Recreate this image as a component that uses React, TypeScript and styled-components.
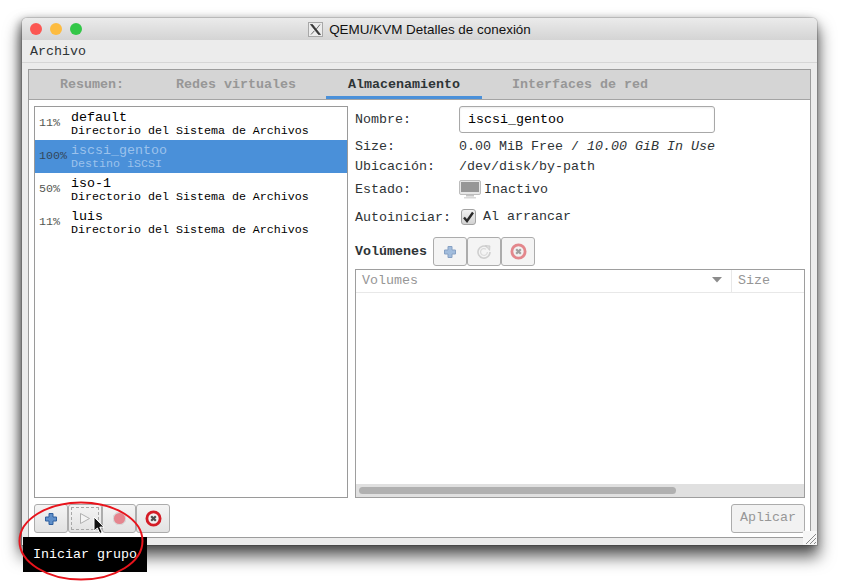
import React, { FC } from "react";
import styled, { createGlobalStyle } from "styled-components";

const GlobalStyle = createGlobalStyle`
  html, body {
    margin: 0;
    background: #ffffff;
    overflow: hidden;
  }
  * {
    box-sizing: border-box;
  }
`;

const Page = styled.div`
  position: relative;
  width: 844px;
  height: 586px;
  padding: 18px 0 0 22px;
  font-family: "Liberation Mono", monospace;
  font-size: 13.33px;
  color: #2e3436;
`;

const Window = styled.div`
  position: relative;
  width: 795px;
  height: 527px;
  display: flex;
  flex-direction: column;
  background: #ececec;
  border-radius: 5px 5px 0 0;
  box-shadow: 0 0 0 1px rgba(0, 0, 0, 0.12), 0 10px 16px 2px rgba(0, 0, 0, 0.62),
    -2px 2px 8px rgba(0, 0, 0, 0.35);
`;

const TitleBar = styled.div`
  position: relative;
  height: 22px;
  flex: none;
  display: flex;
  align-items: center;
  justify-content: center;
  gap: 6px;
  background: linear-gradient(#ebebeb, #d4d4d4);
  border-radius: 5px 5px 0 0;
`;

const Lights = styled.div`
  position: absolute;
  left: 8px;
  top: 5px;
  display: flex;
  gap: 8px;
`;

const Light = styled.span<{ $color: string }>`
  width: 12px;
  height: 12px;
  border-radius: 50%;
  background: ${(p) => p.$color};
`;

const Title = styled.span`
  font-family: "Liberation Sans", Arial, sans-serif;
  font-size: 13.45px;
  color: #111111;
`;

const MenuBar = styled.div`
  height: 23px;
  flex: none;
  padding: 4px 0 0 8px;
  line-height: 16px;
  border-bottom: 1px solid #d6d6d6;
`;

const Notebook = styled.div`
  margin: 6px 6px 7px;
  flex: 1;
  min-height: 0;
  display: flex;
  flex-direction: column;
  background: #ffffff;
  border: 1px solid #9c9c9c;
`;

const TabBar = styled.div`
  height: 30px;
  flex: none;
  display: flex;
  gap: 8px;
  padding-left: 9px;
  background: #d5d5d5;
  border-bottom: 1px solid #a4a4a4;
`;

const Tab = styled.div<{ $active?: boolean }>`
  padding: 7px 22px 0;
  height: 29px;
  font-weight: bold;
  line-height: 16px;
  color: ${(p) => (p.$active ? "#2e3436" : "#979797")};
  border-bottom: 3px solid ${(p) => (p.$active ? "#4a90d9" : "transparent")};
  margin-bottom: -1px;
`;

const Body = styled.div`
  flex: 1;
  min-height: 0;
  display: flex;
  flex-direction: column;
  padding: 6px 5px 4px;
`;

const Panes = styled.div`
  height: 392px;
  flex: none;
  display: flex;
  gap: 7px;
`;

const PoolList = styled.div`
  width: 314px;
  flex: none;
  border: 1px solid #9a9a9a;
  background: #ffffff;
`;

const PoolRow = styled.div<{ $selected?: boolean }>`
  height: 33px;
  display: flex;
  align-items: center;
  background: ${(p) => (p.$selected ? "#4a90d9" : "transparent")};
`;

const Percent = styled.span<{ $selected?: boolean }>`
  width: 36px;
  flex: none;
  padding: 0 0 2px 4px;
  font-size: 11.67px;
  color: ${(p) => (p.$selected ? "#33475c" : "#555753")};
`;

const PoolText = styled.div`
  display: flex;
  flex-direction: column;
  padding-top: 1px;
`;

const PoolName = styled.span<{ $selected?: boolean }>`
  line-height: 15px;
  color: ${(p) => (p.$selected ? "#9cc2ec" : "#000000")};
`;

const PoolKind = styled.span<{ $selected?: boolean }>`
  font-size: 11.67px;
  line-height: 13px;
  color: ${(p) => (p.$selected ? "#9cc2ec" : "#000000")};
`;

const Details = styled.div`
  flex: 1;
  min-width: 0;
  display: flex;
  flex-direction: column;
`;

const FormRow = styled.div<{ $height: number }>`
  height: ${(p) => p.$height}px;
  flex: none;
  display: flex;
  align-items: center;
`;

const Label = styled.span`
  width: 104px;
  flex: none;
`;

const NameEntry = styled.div`
  width: 256px;
  height: 27px;
  padding-left: 8px;
  line-height: 25px;
  color: #000000;
  background: #ffffff;
  border: 1px solid #a8a8a8;
  border-radius: 3px;
  box-shadow: inset 0 1px 2px rgba(0, 0, 0, 0.08);
`;

const Emphasis = styled.em`
  font-style: italic;
`;

const StateValue = styled.div`
  display: flex;
  align-items: center;
  gap: 3px;
`;

const AutoLabel = styled.span`
  margin-left: 7px;
  position: relative;
  top: -1px;
`;

const CheckBox = styled.span`
  width: 15px;
  height: 16px;
  margin-left: 2px;
  display: flex;
  align-items: center;
  justify-content: center;
  background: linear-gradient(#f2f2f2, #d2d2d2);
  border: 1px solid #a2a2a2;
  border-radius: 3px;
`;

const VolumesHeader = styled.div`
  display: flex;
  align-items: center;
  margin-top: 8px;
  height: 29px;
  flex: none;
`;

const VolumesTitle = styled.span`
  width: 78px;
  flex: none;
  font-weight: bold;
`;

const ToolGroup = styled.div`
  display: flex;
`;

const ToolButton = styled.div<{ $dim?: boolean }>`
  width: 34px;
  height: 29px;
  flex: none;
  display: flex;
  align-items: center;
  justify-content: center;
  background: ${(p) => (p.$dim ? "#f4f4f4" : "linear-gradient(#f4f4f4, #e2e2e2)")};
  border: 1px solid #acacac;
  border-radius: 3px;
`;

const FocusRing = styled.div`
  width: 28px;
  height: 23px;
  display: flex;
  align-items: center;
  justify-content: center;
  border: 1px dashed #a8a8a8;
`;

const VolumesTable = styled.div`
  margin-top: 3px;
  flex: 1;
  min-height: 0;
  display: flex;
  flex-direction: column;
  border: 1px solid #9e9e9e;
`;

const TableHead = styled.div`
  height: 23px;
  flex: none;
  display: flex;
  color: #969696;
  font-weight: normal;
  border-bottom: 1px solid #e8e8e8;
`;

const HeadCell = styled.div<{ $grow?: boolean }>`
  ${(p) => (p.$grow ? "flex: 1;" : "width: 72px;")}
  display: flex;
  align-items: center;
  justify-content: space-between;
  padding: 0 9px 2px 6px;
  border-right: ${(p) => (p.$grow ? "1px solid #e8e8e8" : "none")};
`;

const TableBody = styled.div`
  flex: 1;
`;

const ScrollTrack = styled.div`
  height: 13px;
  flex: none;
  padding: 3px 128px 3px 3px;
  background: #e0e0e0;
`;

const ScrollThumb = styled.div`
  height: 7px;
  border-radius: 4px;
  background: #b0b0b0;
`;

const ActionBar = styled.div`
  margin-top: 6px;
  display: flex;
  justify-content: space-between;
`;

const ApplyButton = styled.div`
  width: 74px;
  height: 29px;
  line-height: 26px;
  text-align: center;
  color: #979797;
  background: #f2f2f2;
  border: 1px solid #acacac;
  border-radius: 3px;
`;

const ResizeGrip = styled.svg`
  position: absolute;
  right: 0;
  bottom: 0;
`;

const Tooltip = styled.div`
  position: absolute;
  left: 23px;
  top: 537px;
  width: 124px;
  height: 35px;
  padding-left: 10px;
  line-height: 36px;
  color: #ffffff;
  background: #000000;
`;

const Annotation = styled.svg`
  position: absolute;
  left: 0;
  top: 480px;
`;

const Pointer = styled.svg`
  position: absolute;
  left: 92px;
  top: 516px;
`;

const XLogo: FC = () => (
  <svg width="15" height="15" viewBox="0 0 15 15">
    <rect x="0.5" y="0.5" width="14" height="14" fill="#ececec" stroke="#a8a8a8" />
    <path d="M2.5 2.5h2l8 10h-2zM12 2.5L8.4 7M6.4 8.8L3 12.5" fill="#333333" stroke="#333333" strokeWidth="0.7" />
  </svg>
);

const PlusIcon: FC<{ $faded?: boolean }> = ({ $faded }) => (
  <svg width="14" height="14" viewBox="0 0 14 14" opacity={$faded ? 0.55 : 1}>
    <path
      d="M5 1.5h4v3.5h3.5v4H9v3.5H5V9H1.5V5H5z"
      fill="#5f8fc9"
      stroke="#2f5f9e"
      strokeWidth="1"
      strokeLinejoin="round"
    />
  </svg>
);

const RefreshIcon: FC = () => (
  <svg width="16" height="16" viewBox="0 0 16 16" fill="none">
    <path d="M11.5 3.2A6 6 0 1 0 14 8" stroke="#cfcfcf" strokeWidth="1.6" />
    <path d="M10 5.2A3.4 3.4 0 1 0 11.4 8" stroke="#dadada" strokeWidth="1.2" />
    <path d="M9.5 1.5l4.5.4-.4 4.5z" fill="#dcdcdc" stroke="#c6c6c6" strokeWidth="0.7" />
  </svg>
);

const DeleteIcon: FC<{ $faded?: boolean }> = ({ $faded }) => (
  <svg width="17" height="17" viewBox="0 0 17 17" opacity={$faded ? 0.5 : 1}>
    <circle cx="8.5" cy="8.5" r="6.6" fill="#f2f2f2" stroke="#d41c26" strokeWidth="2.8" />
    <path d="M6.2 6.2l4.6 4.6M10.8 6.2l-4.6 4.6" stroke="#4c4c4c" strokeWidth="2.2" />
  </svg>
);

const PlayIcon: FC = () => (
  <svg width="12" height="13" viewBox="0 0 12 13" fill="none">
    <path d="M1.5 1.5v10l9-5z" fill="#f4f4f4" stroke="#b0b0b0" />
  </svg>
);

const RecordIcon: FC = () => (
  <svg width="15" height="15" viewBox="0 0 15 15">
    <path d="M4.6 1h5.8L14 4.6v5.8L10.4 14H4.6L1 10.4V4.6z" fill="#d8d8d8" />
    <circle cx="7.5" cy="7.5" r="5.6" fill="#e5858e" />
  </svg>
);

const MonitorIcon: FC = () => (
  <svg width="22" height="19" viewBox="0 0 22 19">
    <rect x="0.5" y="0.5" width="21" height="14" rx="1.5" fill="#e6e6e6" stroke="#bdbdbd" />
    <rect x="2" y="2" width="18" height="10" fill="#969696" />
    <rect x="7" y="15" width="8" height="1.5" fill="#c4c4c4" />
    <rect x="5" y="17" width="12" height="1.5" fill="#d8d8d8" />
  </svg>
);

const pools = [
  { percent: "11%", name: "default", kind: "Directorio del Sistema de Archivos" },
  { percent: "100%", name: "iscsi_gentoo", kind: "Destino iSCSI", selected: true },
  { percent: "50%", name: "iso-1", kind: "Directorio del Sistema de Archivos" },
  { percent: "11%", name: "luis", kind: "Directorio del Sistema de Archivos" },
];

const App: FC = () => (
  <>
    <GlobalStyle />
    <Page>
      <Window>
        <TitleBar>
          <Lights>
            <Light $color="#fc5753" />
            <Light $color="#fdbc40" />
            <Light $color="#33c748" />
          </Lights>
          <XLogo />
          <Title>QEMU/KVM Detalles de conexión</Title>
        </TitleBar>
        <MenuBar>Archivo</MenuBar>
        <Notebook>
          <TabBar>
            <Tab>Resumen:</Tab>
            <Tab>Redes virtuales</Tab>
            <Tab $active>Almacenamiento</Tab>
            <Tab>Interfaces de red</Tab>
          </TabBar>
          <Body>
            <Panes>
              <PoolList>
                {pools.map((pool) => (
                  <PoolRow key={pool.name} $selected={pool.selected}>
                    <Percent $selected={pool.selected}>{pool.percent}</Percent>
                    <PoolText>
                      <PoolName $selected={pool.selected}>{pool.name}</PoolName>
                      <PoolKind $selected={pool.selected}>{pool.kind}</PoolKind>
                    </PoolText>
                  </PoolRow>
                ))}
              </PoolList>
              <Details>
                <FormRow $height={27}>
                  <Label>Nombre:</Label>
                  <NameEntry>iscsi_gentoo</NameEntry>
                </FormRow>
                <FormRow $height={26}>
                  <Label>Size:</Label>
                  <span>
                    0.00 MiB Free / <Emphasis>10.00 GiB In Use</Emphasis>
                  </span>
                </FormRow>
                <FormRow $height={14}>
                  <Label>Ubicación:</Label>
                  <span>/dev/disk/by-path</span>
                </FormRow>
                <FormRow $height={32}>
                  <Label>Estado:</Label>
                  <StateValue>
                    <MonitorIcon />
                    <span>Inactivo</span>
                  </StateValue>
                </FormRow>
                <FormRow $height={24}>
                  <Label>Autoiniciar:</Label>
                  <CheckBox>
                    <svg width="13" height="12" viewBox="0 0 13 12" fill="none">
                      <path d="M2 6.5l3 3.5 6-8.5" stroke="#2a2a2a" strokeWidth="2.4" />
                    </svg>
                  </CheckBox>
                  <AutoLabel>Al arrancar</AutoLabel>
                </FormRow>
                <VolumesHeader>
                  <VolumesTitle>Volúmenes</VolumesTitle>
                  <ToolGroup>
                    <ToolButton $dim>
                      <PlusIcon $faded />
                    </ToolButton>
                    <ToolButton $dim>
                      <RefreshIcon />
                    </ToolButton>
                    <ToolButton $dim>
                      <DeleteIcon $faded />
                    </ToolButton>
                  </ToolGroup>
                </VolumesHeader>
                <VolumesTable>
                  <TableHead>
                    <HeadCell $grow>
                      <span>Volumes</span>
                      <svg width="10" height="6" viewBox="0 0 10 6">
                        <path d="M0 0h10L5 5.5z" fill="#8c8c8c" />
                      </svg>
                    </HeadCell>
                    <HeadCell>Size</HeadCell>
                  </TableHead>
                  <TableBody />
                  <ScrollTrack>
                    <ScrollThumb />
                  </ScrollTrack>
                </VolumesTable>
              </Details>
            </Panes>
            <ActionBar>
              <ToolGroup>
                <ToolButton>
                  <PlusIcon />
                </ToolButton>
                <ToolButton>
                  <FocusRing>
                    <PlayIcon />
                  </FocusRing>
                </ToolButton>
                <ToolButton>
                  <RecordIcon />
                </ToolButton>
                <ToolButton>
                  <DeleteIcon />
                </ToolButton>
              </ToolGroup>
              <ApplyButton>Aplicar</ApplyButton>
            </ActionBar>
          </Body>
        </Notebook>
        <ResizeGrip width="14" height="14" viewBox="0 0 14 14">
          <rect x="0" y="0" width="14" height="14" fill="#f6f6f6" />
          <path d="M3 13L13 3M7 13l6-6M11 13l2-2" stroke="#8a8a8a" strokeWidth="1" />
        </ResizeGrip>
      </Window>
      <Tooltip>Iniciar grupo</Tooltip>
      <Annotation width="160" height="106" viewBox="0 0 160 106" fill="none">
        <ellipse cx="81" cy="61" rx="61.5" ry="38.5" stroke="#e8141c" strokeWidth="2" />
      </Annotation>
      <Pointer width="14" height="20" viewBox="0 0 14 20">
        <path d="M2 1v14l3.4-3 2.4 5.5 2.4-1-2.4-5.4H12z" fill="#111111" stroke="#ffffff" strokeWidth="1" />
      </Pointer>
    </Page>
  </>
);

export default App;
